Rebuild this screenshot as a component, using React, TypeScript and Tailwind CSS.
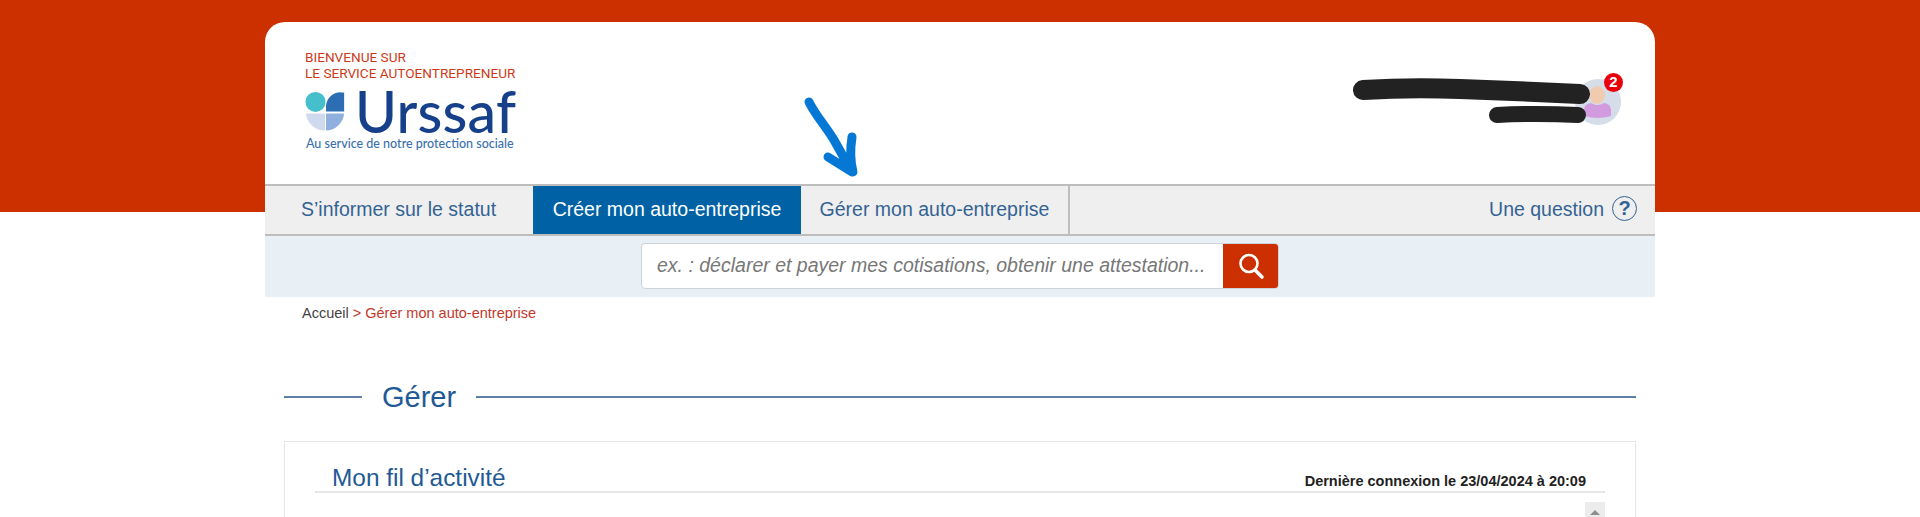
import React from "react";

const arial = "font-['Liberation_Sans',Arial,sans-serif]";

const tabs = [
  { label: "S’informer sur le statut", className: "w-[268px] pl-9 text-[#336393]" },
  { label: "Créer mon auto-entreprise", className: "w-[268px] justify-center bg-[#0062a5] font-[500] text-white" },
  { label: "Gérer mon auto-entreprise", className: "w-[269px] justify-center border-r-2 border-[#bdbdbd] text-[#336393]" },
];

const UrssafLogo = () => (
  <div className="mt-[9px] w-[214px]">
    <div className="flex h-[42px] items-center">
      <svg width="42" height="41" viewBox="0 0 44 42" className="shrink-0">
        <circle cx="11" cy="11" r="10.5" fill="#45bfcb" />
        <path d="M22 21 V15 A15 15 0 0 1 38 1 H41 V21 Z" fill="#2c6db3" />
        <path d="M1 23 H21 V41 A20 20 0 0 1 1 23 Z" fill="#cfdaee" />
        <path d="M22 23 H41 A20 20 0 0 1 22 41 Z" fill="#8fb0de" />
      </svg>
      <span className="ml-[8px] font-['Lato',sans-serif] text-[57px] leading-[42px] font-medium tracking-[0.3px] text-[#17408b]">
        Urssaf
      </span>
    </div>
    <div className="mt-[4px] pl-[1px] font-['Lato',sans-serif] text-[12.5px] leading-[16px] font-medium whitespace-nowrap text-[#3a70ad]">
      Au service de notre protection sociale
    </div>
  </div>
);

const UserBlock = () => (
  <div className="relative mt-[30px] mr-[34px] h-[46px] w-[46px] rounded-full bg-[#d5dde9]">
    <svg width="46" height="46" viewBox="0 0 46 46" className="absolute top-0 left-0">
      <ellipse cx="22" cy="16" rx="8" ry="9" fill="#efcbb0" />
      <path d="M9 37 V31 Q9 25 16 24 Q22 28 29 24 Q36 25 36 31 V37 Q23 41 9 37 Z" fill="#d29be0" />
    </svg>
    <span className="absolute top-[-6px] right-[-2px] flex h-[19px] w-[19px] items-center justify-center rounded-full bg-[#e8000b] font-['Liberation_Sans',sans-serif] text-[15px] font-bold text-white">
      2
    </span>
    {/* scribbled out name */}
    <svg width="260" height="50" viewBox="0 0 260 50" className="absolute top-[-3px] left-[-245px]" fill="none">
      <path d="M33 14 Q80 11 130 13 Q190 15 250 18" stroke="#222222" strokeWidth="20" strokeLinecap="round" />
      <path d="M167 39 Q205 37 248 39" stroke="#222222" strokeWidth="16" strokeLinecap="round" />
    </svg>
  </div>
);

const Arrow = () => (
  <svg width="60" height="90" viewBox="0 0 60 90" className="absolute top-[72px] left-[537px]" fill="none">
    <path
      d="M7 8 C14 22 22 30 32 46 L50 78 M50 78 L26 63 M51 78 Q47 62 50 43"
      stroke="#0578d6"
      strokeWidth="9"
      strokeLinecap="round"
      strokeLinejoin="round"
    />
  </svg>
);

export default function App() {
  return (
    <div className={`h-[517px] overflow-hidden bg-[linear-gradient(#cc3000_212px,#ffffff_212px)] pt-[22px] ${arial}`}>
      <div className="mx-auto w-[1390px] rounded-t-[20px] bg-white">
        {/* header */}
        <header className="relative flex h-[162px] justify-between pt-[27px] pl-[40px]">
          <div>
            <div className="font-['Roboto',sans-serif] text-[13.6px] leading-[16px] text-[#cc3a1a]">
              BIENVENUE SUR
              <br />
              LE SERVICE AUTOENTREPRENEUR
            </div>
            <UrssafLogo />
          </div>
          <Arrow />
          <UserBlock />
        </header>

        {/* main nav */}
        <nav className="flex h-[52px] items-stretch border-y-2 border-[#bdbdbd] bg-[#efefef] text-[19.5px]">
          {tabs.map((tab) => (
            <a key={tab.label} className={`flex items-center ${tab.className}`}>
              {tab.label}
            </a>
          ))}
          <a className="ml-auto flex items-center gap-[8px] pr-[18px] text-[#336393]">
            Une question
            <span className="mb-[4px] flex h-[25px] w-[25px] items-center justify-center rounded-full border-[1.5px] border-[#336393] text-[20px] leading-none font-bold">
              ?
            </span>
          </a>
        </nav>

        {/* search */}
        <div className="flex h-[61px] items-start justify-center bg-[#e8eff5] pt-[7px]">
          <div className="flex h-[46px] w-[638px] overflow-hidden rounded-[4px] border border-[#ccd3dc] bg-white">
            <div className="flex flex-1 items-center pl-[15px] text-[19.5px] whitespace-nowrap text-[#777777] italic">
              ex. : déclarer et payer mes cotisations, obtenir une attestation...
            </div>
            <button className="flex w-[55px] items-center justify-center bg-[#cc3000]">
              <svg width="28" height="28" viewBox="0 0 28 28" fill="none" stroke="#ffffff">
                <circle cx="12" cy="11.5" r="8.5" strokeWidth="2.6" />
                <path d="M18 18 L25 25" strokeWidth="3.6" strokeLinecap="round" />
              </svg>
            </button>
          </div>
        </div>

        {/* breadcrumb */}
        <div className="pt-[8px] pl-[37px] text-[14.5px] leading-[17px] text-[#444444]">
          Accueil <span className="text-[#c0392b]">&gt; Gérer mon auto-entreprise</span>
        </div>

        <div className="px-[19px]">
          {/* section title */}
          <div className="mt-[58px] flex h-[34px] items-center">
            <div className="h-[2px] w-[78px] bg-[#5f7fa6]" />
            <h1 className="px-[20px] text-[29px] leading-none text-[#1f5a96]">Gérer</h1>
            <div className="h-[2px] flex-1 bg-[#5f7fa6]" />
          </div>

          {/* activity card */}
          <section className="mt-[27px] h-[200px] border border-[#e6e6e6] px-[30px]">
            <div className="flex h-[51px] items-end justify-between border-b-2 border-[#e6e6e6] pr-[19px] pl-[17px]">
              <h2 className="text-[24.4px] leading-[26px] text-[#1f5a96]">Mon fil d’activité</h2>
              <span className="pb-[1px] text-[14.5px] leading-[18px] font-bold text-[#222222]">
                Dernière connexion le 23/04/2024 à 20:09
              </span>
            </div>
            <div className="mt-[9px] flex justify-end">
              <div className="flex h-[20px] w-[20px] items-center justify-center bg-[#ececec]">
                <div className="h-0 w-0 border-x-[5px] border-b-[5px] border-x-transparent border-b-[#8f8f8f]" />
              </div>
            </div>
          </section>
        </div>
      </div>
    </div>
  );
}
